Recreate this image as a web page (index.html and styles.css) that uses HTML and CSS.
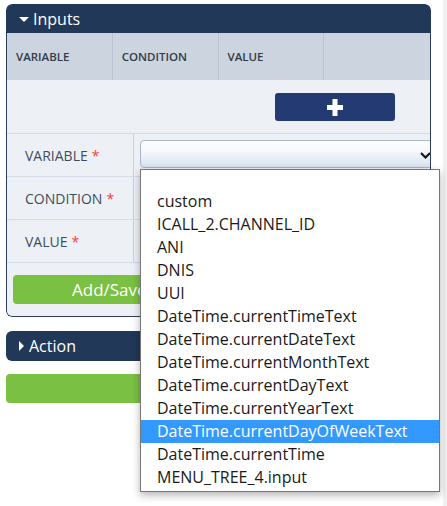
FILE: index.html
```html
<!DOCTYPE html>
<html>
<head>
<meta charset="utf-8">
<link rel="stylesheet" href="styles.css">
</head>
<body>
<div class="page">
  <div class="panel">
    <div class="panel-head"><span class="caret-down"></span>Inputs</div>
    <div class="panel-body">
      <div class="thead">
        <div class="th">VARIABLE</div>
        <div class="th">CONDITION</div>
        <div class="th">VALUE</div>
        <div class="th"></div>
      </div>
      <div class="add-row">
        <button class="plus-btn" type="button">
          <svg width="16" height="17" viewBox="0 0 16 17"><rect x="5.5" y="0" width="5" height="17" fill="#fff"/><rect x="0" y="6" width="16" height="5" fill="#fff"/></svg>
        </button>
      </div>
      <div class="form-row">
        <div class="label">VARIABLE <span class="req">*</span></div>
        <div class="field">
          <div class="select">
            <svg class="chev" width="11" height="7" viewBox="0 0 11 7"><polyline points="1,1 5.5,5.5 10,1" fill="none" stroke="#111" stroke-width="2"/></svg>
          </div>
        </div>
      </div>
      <div class="form-row">
        <div class="label">CONDITION <span class="req">*</span></div>
        <div class="field"></div>
      </div>
      <div class="form-row">
        <div class="label">VALUE <span class="req">*</span></div>
        <div class="field"></div>
      </div>
      <div class="actions">
        <button class="save-btn" type="button">Add/Save</button>
      </div>
    </div>
  </div>
  <div class="section-head"><span class="caret-right"></span>Action</div>
  <div class="green-bar"></div>
</div>
<ul class="dropdown">
  <li>custom</li>
  <li>ICALL_2.CHANNEL_ID</li>
  <li>ANI</li>
  <li>DNIS</li>
  <li>UUI</li>
  <li>DateTime.currentTimeText</li>
  <li>DateTime.currentDateText</li>
  <li>DateTime.currentMonthText</li>
  <li>DateTime.currentDayText</li>
  <li>DateTime.currentYearText</li>
  <li class="active">DateTime.currentDayOfWeekText</li>
  <li>DateTime.currentTime</li>
  <li>MENU_TREE_4.input</li>
</ul>
</body>
</html>
```

FILE: styles.css
```css
* { box-sizing: border-box; }
html, body { margin: 0; padding: 0; }
body {
  font-family: "Open Sans", "Liberation Sans", sans-serif;
  background: linear-gradient(to right, #ffffff 443px, #f0f0f0 443px);
  width: 447px;
  height: 506px;
  overflow: hidden;
  position: relative;
}
.page {
  padding: 4px 0 0 6px;
  width: 431px;
}
.panel {
  width: 425px;
  border-radius: 6px;
  overflow: hidden;
}
.panel-head {
  height: 29px;
  background: #213858;
  color: #fff;
  font-size: 16px;
  display: flex;
  align-items: center;
  padding-left: 13px;
  border-radius: 6px 6px 0 0;
}
.caret-down {
  width: 0; height: 0;
  border-left: 5px solid transparent;
  border-right: 5px solid transparent;
  border-top: 5px solid #fff;
  margin-right: 4px;
  margin-top: 1px;
}
.panel-body {
  background: #edf1f6;
  border: 1px solid #2b3d5c;
  border-top: 0;
  border-radius: 0 0 6px 6px;
  overflow: hidden;
}
.thead {
  display: grid;
  grid-template-columns: repeat(4, 1fr);
  height: 47px;
  background: #cbd4df;
}
.th {
  display: flex;
  align-items: center;
  padding-left: 9px;
  font-size: 11.5px;
  font-weight: 600;
  color: #333a44;
  border-right: 1px solid #b8c4d2;
}
.th:last-child { border-right: 0; }
.add-row {
  height: 54px;
  display: flex;
  justify-content: flex-end;
  align-items: flex-start;
  padding: 13px 35px 0 0;
  border-bottom: 1px solid #d3dbe6;
}
.plus-btn {
  width: 120px;
  height: 28px;
  background: #243a73;
  border: 0;
  border-radius: 3px;
  display: flex;
  align-items: center;
  justify-content: center;
  padding: 0;
}
.form-row {
  display: flex;
  height: 43px;
  border-bottom: 1px solid #d3dbe6;
}
.label {
  flex: 0 0 127px;
  border-right: 1px solid #c9d2de;
  display: flex;
  align-items: center;
  padding-left: 18px;
  font-size: 14px;
  color: #3f4c5e;
}
.req { color: #ff3b3b; margin-left: 4px; }
.field {
  flex: 1;
  min-width: 0;
  padding: 6px 0 0 6px;
}
.select {
  width: 300px;
  height: 28px;
  border: 1px solid #a8b6ca;
  border-radius: 4px;
  background: linear-gradient(to bottom, #ffffff 0%, #f4f7fb 40%, #d9e3f1 100%);
  position: relative;
}
.chev {
  position: absolute;
  right: 8px;
  top: 11px;
}
.actions {
  height: 53px;
  padding: 12px 6px 0 6px;
}
.save-btn {
  width: 100%;
  height: 29px;
  background: #7ac143;
  border: 0;
  border-radius: 4px;
  color: #fff;
  font-family: "Open Sans", "Liberation Sans", sans-serif;
  font-size: 17px;
  text-align: left;
  padding: 0 0 1px 59px;
}
.section-head {
  margin-top: 14px;
  width: 425px;
  height: 30px;
  background: #213858;
  color: #fff;
  font-size: 16px;
  border-radius: 6px;
  display: flex;
  align-items: center;
  padding-left: 13px;
}
.caret-right {
  width: 0; height: 0;
  border-top: 5px solid transparent;
  border-bottom: 5px solid transparent;
  border-left: 5px solid #fff;
  margin-right: 5px;
}
.green-bar {
  margin-top: 13px;
  width: 425px;
  height: 29px;
  background: #7ac143;
  border-radius: 4px;
}
.dropdown {
  position: absolute;
  left: 140px;
  top: 169px;
  width: 300px;
  height: 323px;
  margin: 0;
  padding: 20px 0 0 0;
  list-style: none;
  background: #fff;
  border: 1px solid #767676;
  box-shadow: 0 3px 8px rgba(0,0,0,0.3);
}
.dropdown li {
  height: 23px;
  line-height: 23px;
  padding-left: 16px;
  font-size: 16px;
  color: #1a1a1a;
  white-space: nowrap;
}
.dropdown li.active {
  background: #3399ff;
  color: #fff;
}
```
